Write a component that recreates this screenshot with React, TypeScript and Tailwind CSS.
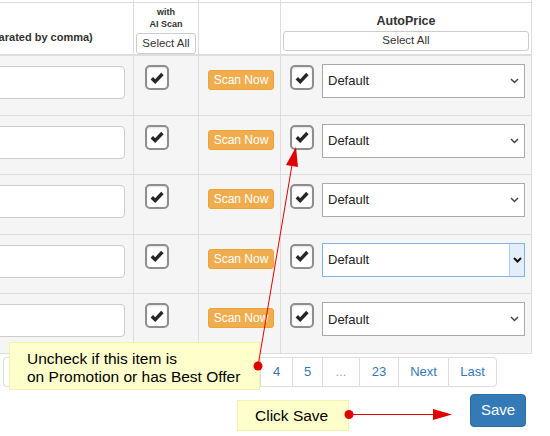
import React from "react";

const rows = [0, 1, 2, 3, 4];

function CheckBox() {
  return (
    <div className="flex h-[25px] w-[24px] items-center justify-center rounded-[5px] border-2 border-[#8e8e8e] bg-white shadow-[inset_0_1px_2px_rgba(0,0,0,0.12)]">
      <svg width="14" height="12" viewBox="0 0 14 12">
        <polyline points="1.8,6.2 5.2,9.6 12.4,2" fill="none" stroke="#262626" strokeWidth="3.4" />
      </svg>
    </div>
  );
}

function Chevron({ dark }: { dark?: boolean }) {
  return (
    <svg width="9" height="6" viewBox="0 0 9 6">
      <polyline points="1,1 4.5,4.5 8,1" fill="none" stroke={dark ? "#111" : "#444"} strokeWidth={dark ? 2 : 1.5} />
    </svg>
  );
}

function PriceSelect({ focused }: { focused?: boolean }) {
  if (focused) {
    return (
      <div className="flex h-[34px] w-[203px] items-stretch border border-[#7eb4ea] bg-white">
        <span className="flex flex-1 items-center pl-[5px] text-[13px] text-[#222]">Default</span>
        <span className="flex w-[15px] items-center justify-center border-l border-[#a9cdef] bg-[#e2eefb]">
          <Chevron dark />
        </span>
      </div>
    );
  }
  return (
    <div className="flex h-[34px] w-[203px] items-center justify-between border border-[#a9a9a9] bg-white pl-[5px] pr-[5px]">
      <span className="text-[13px] text-[#222]">Default</span>
      <Chevron />
    </div>
  );
}

function PageItem({ w, label, muted, first, last }: { w: string; label?: string; muted?: boolean; first?: boolean; last?: boolean }) {
  return (
    <span
      className={
        "flex items-center justify-center border-y border-l border-[#ddd] bg-white " +
        w +
        (muted ? " text-[#9aa9bb]" : "") +
        (first ? " rounded-l-[4px] bg-[#eee]" : "") +
        (last ? " rounded-r-[4px] border-r" : "")
      }
    >
      {label}
    </span>
  );
}

export default function App() {
  return (
    <div className="relative h-[436px] w-[550px] overflow-hidden bg-white font-['Liberation_Sans',Arial,sans-serif] text-[#333]">
      {/* table */}
      <div className="ml-[-40px] w-[572px]">
        {/* clipped row above header */}
        <div className="flex h-[3px] border-b border-[#ddd]">
          <div className="w-[173px]" />
          <div className="w-[65px] border-l border-[#ddd]" />
          <div className="w-[82px] border-l border-[#ddd]" />
          <div className="w-[252px] border-x border-[#ddd]" />
        </div>

        {/* header */}
        <div className="flex h-[53px] border-b-2 border-[#ddd] bg-white">
          <div className="flex w-[173px] items-center whitespace-nowrap pl-[16px] pt-[17px] text-[11px] font-bold text-[#333]">
            (separated by comma)
          </div>
          <div className="flex w-[65px] flex-col items-center border-l border-[#ddd] pt-[3px]">
            <span className="text-[9px] font-bold leading-[12px] text-[#333]">with</span>
            <span className="text-[9px] font-bold leading-[12px] text-[#333]">AI Scan</span>
            <button className="mt-[3px] h-[21px] w-[60px] rounded-[3px] border border-[#ccc] bg-white text-[11.5px] text-[#333]">
              Select All
            </button>
          </div>
          <div className="w-[82px] border-l border-[#ddd]" />
          <div className="flex w-[252px] flex-col items-center border-x border-[#ddd] pt-[10px]">
            <span className="text-[12.5px] font-bold leading-[16px] text-[#333]">AutoPrice</span>
            <button className="mt-[2px] h-[20px] w-[246px] rounded-[3px] border border-[#ccc] bg-white text-[11.5px] text-[#333]">
              Select All
            </button>
          </div>
        </div>

        {/* body rows */}
        {rows.map((r) => (
          <div key={r} className="flex h-[59.6px] border-b border-[#ddd] bg-[#f5f5f5]">
            <div className="flex w-[173px] items-start pl-[8px] pr-[8px] pt-[10px]">
              <div className="h-[33px] w-full rounded-[4px] border border-[#ccc] bg-white" />
            </div>
            <div className="w-[65px] border-l border-[#ddd] pl-[11px] pt-[9px]">
              <CheckBox />
            </div>
            <div className="w-[82px] border-l border-[#ddd] pl-[9px] pt-[11px]">
              <button className="h-[20px] w-[66px] rounded-[3px] border border-[#eea236] bg-[#f0ad4e] text-[12px] leading-[18px] text-white">
                Scan Now
              </button>
            </div>
            <div className="flex w-[252px] items-start gap-[8px] border-x border-[#ddd] pl-[9px] pt-[8px]">
              <div className="pt-[1px]">
                <CheckBox />
              </div>
              <PriceSelect focused={r === 3} />
            </div>
          </div>
        ))}
      </div>

      {/* pagination (left part lies under the callout) */}
      <div className="ml-[3px] mt-[3px] flex h-[30px] text-[13px] text-[#337ab7]">
        <PageItem w="w-[30px]" first />
        <PageItem w="w-[48px]" />
        <PageItem w="w-[48px]" />
        <PageItem w="w-[37px]" />
        <PageItem w="w-[30px]" />
        <PageItem w="w-[30px]" />
        <PageItem w="w-[34px]" />
        <PageItem w="w-[32px]" label="4" />
        <PageItem w="w-[30px]" label="5" />
        <PageItem w="w-[37px]" label="..." muted />
        <PageItem w="w-[39px]" label="23" />
        <PageItem w="w-[50px]" label="Next" />
        <PageItem w="w-[49px]" label="Last" last />
      </div>

      {/* save */}
      <div className="mt-[7px] flex justify-end pr-[24px]">
        <button className="h-[33px] w-[56px] rounded-[4px] border border-[#2e6da4] bg-[#337ab7] text-[15px] text-white">
          Save
        </button>
      </div>

      {/* annotation callouts */}
      <div className="absolute left-[9px] top-[342px] h-[48px] w-[251px] border border-[#f3f3b0] bg-[#ffffcc] pl-[17px] pt-[7px] text-[15.5px] leading-[18px] text-black">
        <div>Uncheck if this item is</div>
        <div>on Promotion or has Best Offer</div>
      </div>
      <div className="absolute left-[237px] top-[400px] flex h-[31px] w-[112px] items-center border border-[#f3f3b0] bg-[#ffffcc] pl-[17px] text-[15.5px] text-black">
        Click Save
      </div>

      {/* arrows */}
      <svg className="pointer-events-none absolute left-0 top-0" width="550" height="436">
        <line x1="258" y1="366" x2="292" y2="165" stroke="#e00000" strokeWidth="1" />
        <polygon points="296,147 286,165 298,167" fill="#e00000" />
        <circle cx="258" cy="366" r="4.5" fill="#e00000" />
        <line x1="349" y1="414.5" x2="434" y2="414.5" stroke="#e00000" strokeWidth="1" />
        <polygon points="433,409 452,414.5 433,420" fill="#e00000" />
        <circle cx="349" cy="414.5" r="4.5" fill="#e00000" />
      </svg>
    </div>
  );
}
